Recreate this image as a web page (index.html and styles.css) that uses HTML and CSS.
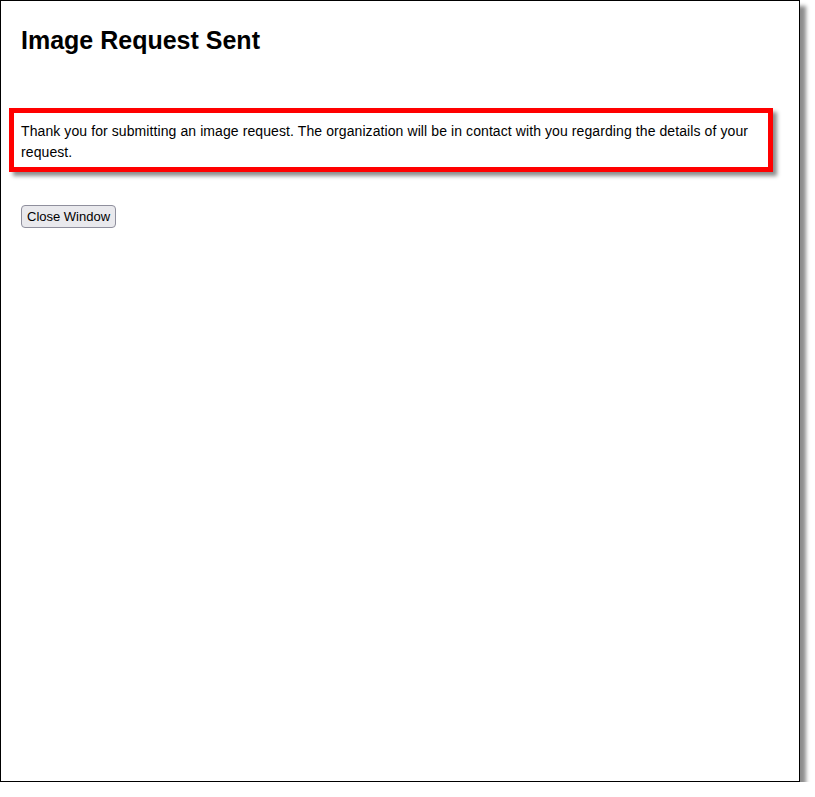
FILE: index.html
```html
<!DOCTYPE html>
<html>
<head>
<meta charset="utf-8">
<title>Image Request Sent</title>
<link rel="stylesheet" href="styles.css">
</head>
<body>
<div class="window">
  <h1 class="title">Image Request Sent</h1>
  <div class="notice">
    <p class="notice-text">Thank you for submitting an image request. The organization will be in contact with you regarding the details of your request.</p>
  </div>
  <button class="close-btn" type="button">Close Window</button>
</div>
</body>
</html>
```

FILE: styles.css
```css
html, body {
  margin: 0;
  padding: 0;
  background: #ffffff;
}

body {
  font-family: "Liberation Sans", Arial, sans-serif;
  color: #000;
}

.window {
  box-sizing: border-box;
  width: 800px;
  height: 782px;
  border: 1px solid #000;
  background: #fff;
  padding: 0 20px;
  box-shadow: 6px 6px 4px rgba(0, 0, 0, 0.45);
  display: flex;
  flex-direction: column;
  align-items: flex-start;
}

.title {
  font-size: 25px;
  font-weight: bold;
  margin: 25px 0 0 0;
  line-height: normal;
}

.notice {
  align-self: stretch;
  margin: 53px 6px 0 -12px;
  border: 5px solid #ff0000;
  padding: 8px 0 4px 7px;
  box-shadow: 4px 4px 4px rgba(0, 0, 0, 0.45);
}

.notice-text {
  margin: 0;
  font-size: 14px;
  line-height: 21px;
  letter-spacing: 0.09px;
}

.close-btn {
  margin-top: 33px;
  font-family: "Liberation Sans", Arial, sans-serif;
  font-size: 13px;
  height: 23px;
  padding: 0 5px;
  background: #e9e9ed;
  border: 1px solid #8f8f9d;
  border-radius: 4px;
  color: #000;
}
```
